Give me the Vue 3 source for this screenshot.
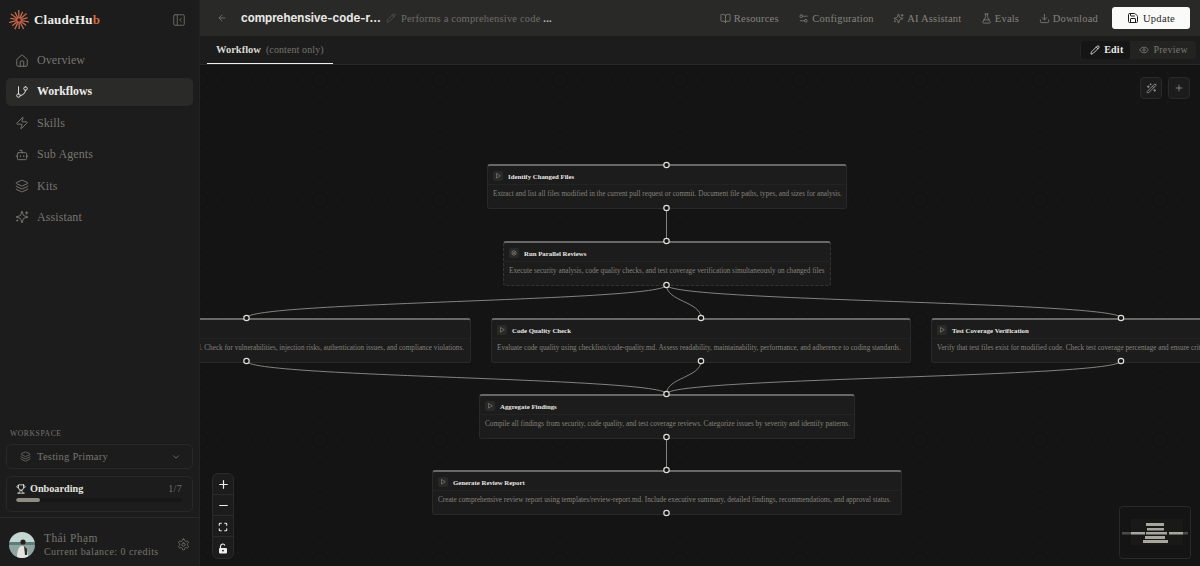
<script setup>
import { h } from 'vue'

const icons = {
  house: 'M15 21v-8a1 1 0 0 0-1-1h-4a1 1 0 0 0-1 1v8|M3 10a2 2 0 0 1 .709-1.528l7-5.999a2 2 0 0 1 2.582 0l7 5.999A2 2 0 0 1 21 10v9a2 2 0 0 1-2 2H5a2 2 0 0 1-2-2z',
  branch: 'M6 3v12|M18 3a3 3 0 1 0 0 6a3 3 0 1 0 0-6|M6 15a3 3 0 1 0 0 6a3 3 0 1 0 0-6|M18 9a9 9 0 0 1-9 9',
  zap: 'M4 14a1 1 0 0 1-.78-1.63l9.9-10.2a.5.5 0 0 1 .86.46l-1.92 6.02A1 1 0 0 0 13 10h7a1 1 0 0 1 .78 1.63l-9.9 10.2a.5.5 0 0 1-.86-.46l1.92-6.02A1 1 0 0 0 11 14z',
  bot: 'M12 8V4H8|M6 8h12a2 2 0 0 1 2 2v8a2 2 0 0 1-2 2H6a2 2 0 0 1-2-2v-8a2 2 0 0 1 2-2z|M2 14h2|M20 14h2|M15 13v2|M9 13v2',
  layers: 'M12.83 2.18a2 2 0 0 0-1.66 0L2.6 6.08a1 1 0 0 0 0 1.83l8.58 3.91a2 2 0 0 0 1.66 0l8.58-3.9a1 1 0 0 0 0-1.83z|M2 12a1 1 0 0 0 .58.91l8.6 3.91a2 2 0 0 0 1.65 0l8.58-3.9A1 1 0 0 0 22 12|M2 17a1 1 0 0 0 .58.91l8.6 3.91a2 2 0 0 0 1.65 0l8.58-3.9A1 1 0 0 0 22 17',
  sparkles: 'M9.937 15.5A2 2 0 0 0 8.5 14.063l-6.135-1.582a.5.5 0 0 1 0-.962L8.5 9.936A2 2 0 0 0 9.937 8.5l1.582-6.135a.5.5 0 0 1 .963 0L14.063 8.5A2 2 0 0 0 15.5 9.937l6.135 1.581a.5.5 0 0 1 0 .964L15.5 14.063a2 2 0 0 0-1.437 1.437l-1.582 6.135a.5.5 0 0 1-.963 0z|M20 3v4|M22 5h-4|M4 17v2|M5 18H3',
  panel: 'M5 3h14a2 2 0 0 1 2 2v14a2 2 0 0 1-2 2H5a2 2 0 0 1-2-2V5a2 2 0 0 1 2-2z|M9 3v18|M16 15l-3-3 3-3',
  chevron: 'm6 9 6 6 6-6',
  trophy: 'M6 9H4.5a2.5 2.5 0 0 1 0-5H6|M18 9h1.5a2.5 2.5 0 0 0 0-5H18|M4 22h16|M10 14.66V17c0 .55-.47.98-.97 1.21C7.85 18.75 7 20.24 7 22|M14 14.66V17c0 .55.47.98.97 1.21C16.15 18.75 17 20.24 17 22|M18 2H6v7a6 6 0 0 0 12 0V2Z',
  gear: 'M12.22 2h-.44a2 2 0 0 0-2 2v.18a2 2 0 0 1-1 1.73l-.43.25a2 2 0 0 1-2 0l-.15-.08a2 2 0 0 0-2.73.73l-.22.38a2 2 0 0 0 .73 2.73l.15.1a2 2 0 0 1 1 1.72v.51a2 2 0 0 1-1 1.74l-.15.09a2 2 0 0 0-.73 2.73l.22.38a2 2 0 0 0 2.73.73l.15-.08a2 2 0 0 1 2 0l.43.25a2 2 0 0 1 1 1.73V20a2 2 0 0 0 2 2h.44a2 2 0 0 0 2-2v-.18a2 2 0 0 1 1-1.73l.43-.25a2 2 0 0 1 2 0l.15.08a2 2 0 0 0 2.73-.73l.22-.39a2 2 0 0 0-.73-2.73l-.15-.08a2 2 0 0 1-1-1.74v-.5a2 2 0 0 1 1-1.74l.15-.09a2 2 0 0 0 .73-2.73l-.22-.38a2 2 0 0 0-2.73-.73l-.15.08a2 2 0 0 1-2 0l-.43-.25a2 2 0 0 1-1-1.73V4a2 2 0 0 0-2-2z|M12 9a3 3 0 1 0 0 6a3 3 0 1 0 0-6',
  back: 'm12 19-7-7 7-7|M19 12H5',
  pencil: 'M21.174 6.812a1 1 0 0 0-3.986-3.987L3.842 16.174a2 2 0 0 0-.5.83l-1.321 4.352a.5.5 0 0 0 .623.622l4.353-1.32a2 2 0 0 0 .83-.497z|m15 5 4 4',
  book: 'M12 7v14|M3 18a1 1 0 0 1-1-1V4a1 1 0 0 1 1-1h5a4 4 0 0 1 4 4 4 4 0 0 1 4-4h5a1 1 0 0 1 1 1v13a1 1 0 0 1-1 1h-6a3 3 0 0 0-3 3 3 3 0 0 0-3-3z',
  sliders: 'M20 7h-9|M14 17H5|M17 14a3 3 0 1 0 0 6a3 3 0 1 0 0-6|M7 4a3 3 0 1 0 0 6a3 3 0 1 0 0-6',
  flask: 'M14 2v6a2 2 0 0 0 .245.96l5.51 10.08A2 2 0 0 1 18 22H6a2 2 0 0 1-1.755-2.96l5.51-10.08A2 2 0 0 0 10 8V2|M6.453 15h11.094|M8.5 2h7',
  download: 'M21 15v4a2 2 0 0 1-2 2H5a2 2 0 0 1-2-2v-4|M7 10l5 5 5-5|M12 15V3',
  save: 'M15.2 3a2 2 0 0 1 1.4.6l3.8 3.8a2 2 0 0 1 .6 1.4V19a2 2 0 0 1-2 2H5a2 2 0 0 1-2-2V5a2 2 0 0 1 2-2z|M17 21v-7a1 1 0 0 0-1-1H8a1 1 0 0 0-1 1v7|M7 3v4a1 1 0 0 0 1 1h7',
  eye: 'M2.062 12.348a1 1 0 0 1 0-.696 10.75 10.75 0 0 1 19.876 0 1 1 0 0 1 0 .696 10.75 10.75 0 0 1-19.876 0|M12 9a3 3 0 1 0 0 6a3 3 0 1 0 0-6',
  wand: 'm21.64 3.64-1.28-1.28a1.21 1.21 0 0 0-1.72 0L2.36 18.64a1.21 1.21 0 0 0 0 1.72l1.28 1.28a1.2 1.2 0 0 0 1.72 0L21.64 5.36a1.2 1.2 0 0 0 0-1.72|m14 7 3 3|M5 6v4|M19 14v4|M10 2v2|M7 8H3|M21 16h-4|M11 3H9',
  plus: 'M5 12h14|M12 5v14',
  minus: 'M5 12h14',
  fit: 'M8 3H5a2 2 0 0 0-2 2v3|M21 8V5a2 2 0 0 0-2-2h-3|M3 16v3a2 2 0 0 0 2 2h3|M16 21h3a2 2 0 0 0 2-2v-3',
  play: 'M6 3.5v17L20 12z',
  boxes: 'M12 3l8 4.5v9L12 21l-8-4.5v-9z|M8 9l8 6|M16 9l-8 6'
}

const Icon = (props) =>
  h(
    'svg',
    {
      width: props.size || 16,
      height: props.size || 16,
      viewBox: '0 0 24 24',
      fill: 'none',
      stroke: 'currentColor',
      'stroke-width': props.sw || 2,
      'stroke-linecap': 'round',
      'stroke-linejoin': 'round'
    },
    icons[props.name].split('|').map((d) => h('path', { d }))
  )
Icon.props = ['name', 'size', 'sw']

const rays = Array.from({ length: 14 }, (_, i) => {
  const a = (i * Math.PI) / 7 + 0.2
  const r = i % 2 ? 8.4 : 9.6
  return {
    x1: 10 + Math.cos(a) * 2.6,
    y1: 10 + Math.sin(a) * 2.6,
    x2: 10 + Math.cos(a) * r,
    y2: 10 + Math.sin(a) * r
  }
})

const nav = [
  { label: 'Overview', icon: 'house' },
  { label: 'Workflows', icon: 'branch', active: true },
  { label: 'Skills', icon: 'zap' },
  { label: 'Sub Agents', icon: 'bot' },
  { label: 'Kits', icon: 'layers' },
  { label: 'Assistant', icon: 'sparkles' }
]

const actions = [
  { label: 'Resources', icon: 'book' },
  { label: 'Configuration', icon: 'sliders' },
  { label: 'AI Assistant', icon: 'sparkles' },
  { label: 'Evals', icon: 'flask' },
  { label: 'Download', icon: 'download' }
]

const nodes = [
  { title: 'Identify Changed Files', icon: 'play', x: 487, y: 164, w: 360, text: 'Extract and list all files modified in the current pull request or commit. Document file paths, types, and sizes for analysis.' },
  { title: 'Run Parallel Reviews', icon: 'boxes', x: 503, y: 241, w: 328, dashed: true, text: 'Execute security analysis, code quality checks, and test coverage verification simultaneously on changed files' },
  { title: 'Security Review', icon: 'play', x: 21, y: 318, w: 450, end: true, text: 'Review code against checklists/security-review.md. Check for vulnerabilities, injection risks, authentication issues, and compliance violations.' },
  { title: 'Code Quality Check', icon: 'play', x: 491, y: 318, w: 420, text: 'Evaluate code quality using checklists/code-quality.md. Assess readability, maintainability, performance, and adherence to coding standards.' },
  { title: 'Test Coverage Verification', icon: 'play', x: 931, y: 318, w: 380, text: 'Verify that test files exist for modified code. Check test coverage percentage and ensure critical paths are tested.' },
  { title: 'Aggregate Findings', icon: 'play', x: 479, y: 394, w: 376, text: 'Compile all findings from security, code quality, and test coverage reviews. Categorize issues by severity and identify patterns.' },
  { title: 'Generate Review Report', icon: 'play', x: 432, y: 470, w: 470, text: 'Create comprehensive review report using templates/review-report.md. Include executive summary, detailed findings, recommendations, and approval status.' }
]

const edges = [
  'M666.5 208V241',
  'M666.5 285C666.5 301.5 246.5 301.5 246.5 318',
  'M666.5 285C666.5 301.5 701 301.5 701 318',
  'M666.5 285C666.5 301.5 1121 301.5 1121 318',
  'M246.5 361C246.5 377.5 666.5 377.5 666.5 394',
  'M701 361C701 377.5 666.5 377.5 666.5 394',
  'M1121 361C1121 377.5 666.5 377.5 666.5 394',
  'M666.5 437V470'
]

const handles = [
  [666.5, 165], [666.5, 208], [666.5, 241], [666.5, 285],
  [246.5, 318], [701, 318], [1121, 318],
  [246.5, 361], [701, 361], [1121, 361],
  [666.5, 394], [666.5, 437], [666.5, 470], [666.5, 513]
]

const miniBars = [
  [27, 17, 18, 3, '#a8a79d'],
  [28, 22, 17, 2.5, '#a8a79d'],
  [12, 26, 14, 2.5, '#a8a79d'],
  [27, 26, 21, 2.5, '#a8a79d'],
  [50, 26, 14, 2.5, '#a8a79d'],
  [3, 26, 9, 2.5, '#4a4a47'],
  [64, 26, 5, 2.5, '#4a4a47'],
  [26, 30, 20, 3, '#a8a79d'],
  [24, 34, 25, 3, '#a8a79d']
]
</script>

<template>
  <div class="app">
    <aside class="sidebar">
      <div class="brand">
        <svg class="logo" width="20" height="20" viewBox="0 0 20 20" fill="none">
          <line v-for="(r, i) in rays" :key="i" :x1="r.x1" :y1="r.y1" :x2="r.x2" :y2="r.y2" stroke="#c4694c" stroke-width="1.3" stroke-linecap="round" />
          <circle cx="10" cy="10" r="2.2" stroke="#d9583c" stroke-width="1" />
        </svg>
        <span class="brand-name">ClaudeHu<em>b</em></span>
        <Icon class="collapse" name="panel" :size="14" :sw="1.6" />
      </div>

      <nav class="nav">
        <a v-for="item in nav" :key="item.label" class="nav-item" :class="{ active: item.active }">
          <Icon :name="item.icon" :size="14" :sw="1.6" />
          <span>{{ item.label }}</span>
        </a>
      </nav>

      <div class="bottom">
        <div class="ws-label">WORKSPACE</div>
        <div class="ws-select">
          <Icon name="layers" :size="11" :sw="1.6" />
          <span>Testing Primary</span>
          <Icon class="ws-chevron" name="chevron" :size="10" />
        </div>
        <div class="onboard">
          <div class="onboard-top">
            <Icon name="trophy" :size="10" />
            <b>Onboarding</b>
            <i>1/7</i>
          </div>
          <div class="progress"><div class="progress-fill"></div></div>
        </div>
      </div>

      <div class="user">
        <svg class="avatar" width="26" height="26" viewBox="0 0 26 26">
          <defs>
            <clipPath id="avatarClip"><circle cx="13" cy="13" r="13" /></clipPath>
          </defs>
          <g clip-path="url(#avatarClip)">
            <rect width="26" height="11" fill="#c4d6d2" />
            <rect y="10" width="26" height="3" fill="#5f7d78" />
            <rect y="13" width="26" height="13" fill="#8fa5a0" />
            <circle cx="14" cy="10" r="2.6" fill="#24211e" />
            <path d="M8 26c0-8 2-12 5-12s6 4 6 12z" fill="#e6e4df" />
            <path d="M15 14l3 3v6h-2z" fill="#2e2b28" />
          </g>
        </svg>
        <div class="user-text">
          <div class="user-name">Thái Phạm</div>
          <div class="user-credit">Current balance: 0 credits</div>
        </div>
        <Icon class="user-gear" name="gear" :size="13" :sw="1.6" />
      </div>
    </aside>

    <main class="main">
      <header class="topbar">
        <Icon class="back" name="back" :size="10" />
        <h1 class="title">comprehensive-code-r...</h1>
        <Icon class="edit-title" name="pencil" :size="10" :sw="1.6" />
        <p class="desc">Performs a comprehensive code <b>...</b></p>
        <div class="actions">
          <a v-for="a in actions" :key="a.label" class="action">
            <Icon :name="a.icon" :size="11" :sw="1.7" />
            <span>{{ a.label }}</span>
          </a>
          <button class="update">
            <Icon name="save" :size="12" />
            <span>Update</span>
          </button>
        </div>
      </header>

      <div class="tabs">
        <div class="tab"><b>Workflow</b><span>(content only)</span></div>
        <div class="toggle">
          <div class="toggle-btn on"><Icon name="pencil" :size="10" /><span>Edit</span></div>
          <div class="toggle-btn"><Icon name="eye" :size="10" /><span>Preview</span></div>
        </div>
      </div>

      <section class="canvas">
        <div class="viewport">
          <div
            v-for="n in nodes"
            :key="n.title"
            class="node"
            :class="{ dashed: n.dashed }"
            :style="{ left: n.x + 'px', top: n.y + 'px', width: n.w + 'px' }"
          >
            <div class="node-head">
              <span class="node-icon"><Icon :name="n.icon" :size="6" :sw="2" /></span>
              <span class="node-title">{{ n.title }}</span>
            </div>
            <div class="node-text" :class="{ end: n.end }">{{ n.text }}</div>
          </div>
          <svg class="wires" width="1200" height="566" viewBox="0 0 1200 566" fill="none">
            <path v-for="(d, i) in edges" :key="i" :d="d" stroke="#8f8f8a" stroke-width="0.9" />
            <circle v-for="(p, i) in handles" :key="'h' + i" :cx="p[0]" :cy="p[1]" r="2.7" fill="#141414" stroke="#dededa" stroke-width="1.2" />
          </svg>
        </div>

        <div class="tools">
          <button class="tool"><Icon name="wand" :size="11" :sw="1.7" /></button>
          <button class="tool"><Icon name="plus" :size="10" :sw="1.7" /></button>
        </div>

        <div class="zoom">
          <button class="zoom-btn"><Icon name="plus" :size="13" :sw="2.2" /></button>
          <button class="zoom-btn"><Icon name="minus" :size="13" :sw="2.2" /></button>
          <button class="zoom-btn"><Icon name="fit" :size="10" :sw="2.6" /></button>
          <button class="zoom-btn">
            <svg width="10" height="11" viewBox="0 0 10 11">
              <path d="M2.5 5V3.2a2.3 2.3 0 0 1 4.4-.8" fill="none" stroke="#eee" stroke-width="1.2" />
              <rect x="1" y="5" width="8" height="5.5" rx="1" fill="#eee" />
              <circle cx="5" cy="7.6" r="0.9" fill="#1c1c1c" />
            </svg>
          </button>
        </div>

        <svg class="minimap" width="72" height="53" viewBox="0 0 72 53">
          <rect x="0.5" y="0.5" width="71" height="52" rx="3" fill="#141414" stroke="#2a2a28" />
          <rect x="12" y="13" width="52" height="26" fill="#191918" />
          <rect v-for="(b, i) in miniBars" :key="i" :x="b[0]" :y="b[1]" :width="b[2]" :height="b[3]" :fill="b[4]" />
        </svg>
      </section>
    </main>
  </div>
</template>

<style>
html, body { margin: 0; background: #141414; }
</style>

<style scoped>
.app {
  width: 1200px;
  height: 566px;
  display: flex;
  overflow: hidden;
  font-family: "Liberation Serif", serif;
  color: #77756f;
}
.sidebar {
  width: 200px;
  flex: none;
  box-sizing: border-box;
  display: flex;
  flex-direction: column;
  background: #1c1c1c;
  border-right: 1px solid #232323;
}
.brand {
  display: flex;
  align-items: center;
  height: 40px;
  padding: 0 13px 0 9px;
}
.logo { margin-right: 5px; }
.brand-name {
  font-size: 13px;
  font-weight: 700;
  color: #eeedea;
  letter-spacing: 0.2px;
}
.brand-name em { font-style: normal; color: #cf6a45; }
.collapse { margin-left: auto; color: #6b6a65; }
.nav {
  display: flex;
  flex-direction: column;
  gap: 3.4px;
  padding: 6.5px 6px 0;
}
.nav-item {
  display: flex;
  align-items: center;
  gap: 8px;
  height: 28px;
  padding-left: 9px;
  border-radius: 5px;
  font-size: 12px;
  letter-spacing: 0.1px;
}
.nav-item svg { color: #7c7a74; }
.nav-item.active {
  background: #2a2a29;
  color: #eeedea;
  font-size: 11.8px;
  font-weight: 700;
  letter-spacing: 0;
}
.nav-item.active svg { color: #e8e7e3; }
.bottom {
  margin-top: auto;
  padding: 0 6px;
}
.ws-label {
  padding-left: 4px;
  font-size: 7.6px;
  letter-spacing: 0.6px;
  line-height: 10px;
  color: #77756f;
  margin-bottom: 5px;
}
.ws-select {
  height: 25px;
  box-sizing: border-box;
  display: flex;
  align-items: center;
  gap: 6px;
  padding: 0 11px 0 13px;
  border: 1px solid #282827;
  border-radius: 5px;
  font-size: 10.5px;
  letter-spacing: 0.25px;
}
.ws-chevron { margin-left: auto; }
.onboard {
  margin-top: 7px;
  height: 36px;
  box-sizing: border-box;
  padding: 6px 10px 0 9px;
  border: 1px solid #282827;
  border-radius: 5px;
}
.onboard-top {
  display: flex;
  align-items: center;
  gap: 4px;
  font-size: 10.2px;
  color: #e4e3df;
}
.onboard-top i {
  margin-left: auto;
  font-style: normal;
  font-size: 10px;
  letter-spacing: 0.3px;
  color: #6f6d68;
}
.progress {
  margin-top: 4px;
  height: 4px;
  border-radius: 2px;
  background: #171717;
  overflow: hidden;
}
.progress-fill {
  width: 24px;
  height: 100%;
  border-radius: 2px;
  background: #8d8c80;
}
.user {
  margin-top: 5px;
  height: 49px;
  box-sizing: border-box;
  display: flex;
  align-items: center;
  gap: 9px;
  padding: 5px 9px 0;
  border-top: 1px solid #2a2a29;
}
.avatar { flex: none; }
.user-name { font-size: 11.5px; letter-spacing: 0.4px; line-height: 14px; }
.user-credit { font-size: 10px; letter-spacing: 0.45px; line-height: 14px; }
.user-gear { margin-left: auto; }
.main {
  flex: 1;
  min-width: 0;
  display: flex;
  flex-direction: column;
}
.topbar {
  height: 36px;
  flex: none;
  box-sizing: border-box;
  display: flex;
  align-items: center;
  padding: 0 10px 0 17px;
  background: #292928;
}
.back { color: #77756f; margin-right: 14px; }
.title {
  margin: 0;
  font-family: "Inter", sans-serif;
  font-size: 11.4px;
  font-weight: 700;
  color: #e8e7e3;
  white-space: nowrap;
}
.edit-title { margin: 0 5px; color: #5f5e5a; }
.desc {
  margin: 0;
  font-size: 10.5px;
  letter-spacing: 0.18px;
  white-space: nowrap;
  color: #6f6d68;
}
.desc b { color: #bbb; }
.actions {
  margin-left: auto;
  display: flex;
  align-items: center;
}
.action {
  display: flex;
  align-items: center;
  gap: 3px;
  margin-right: 19.5px;
  font-size: 10.5px;
  letter-spacing: 0.2px;
  color: #85837c;
}
.action:last-of-type { margin-right: 14px; }
.update {
  width: 78px;
  height: 22px;
  padding: 0;
  display: flex;
  align-items: center;
  justify-content: center;
  gap: 4px;
  border: 0;
  border-radius: 3px;
  background: #fafaf8;
  color: #1c1c1c;
  font-family: inherit;
  font-size: 10.5px;
  letter-spacing: 0.3px;
}
.tabs {
  height: 29px;
  flex: none;
  box-sizing: border-box;
  display: flex;
  justify-content: space-between;
  padding: 0 4px 0 7px;
  background: #1c1c1c;
  border-bottom: 1px solid #292928;
}
.tab {
  width: 126px;
  box-sizing: border-box;
  height: 28px;
  padding: 0 0 1px 9px;
  display: flex;
  align-items: center;
  gap: 5px;
  border-bottom: 1px solid #f0f0ee;
  font-size: 10.5px;
  white-space: nowrap;
}
.tab b { color: #d8d7d3; }
.tab span { font-size: 10px; letter-spacing: 0.1px; }
.toggle {
  display: flex;
  height: 18px;
  margin-top: 5px;
  padding: 0 1px;
  background: #232322;
  border-radius: 3px;
}
.toggle-btn {
  display: flex;
  align-items: center;
  gap: 4px;
  padding: 0 7px 1px 9px;
  font-size: 10px;
  letter-spacing: 0.25px;
  color: #7a7871;
}
.toggle-btn.on {
  background: #151515;
  color: #eeedea;
  font-weight: 700;
  border-radius: 3px;
}
.canvas {
  position: relative;
  flex: 1;
  overflow: hidden;
  background-color: #141414;
  background-image: radial-gradient(#1f1f1f 0.6px, transparent 0.8px);
  background-size: 15px 15px;
}
.viewport {
  position: absolute;
  left: 0;
  top: 0;
  width: 1200px;
  height: 566px;
  transform: translate(-200px, -65px);
}
.wires {
  position: absolute;
  left: 0;
  top: 0;
  pointer-events: none;
}
.node {
  position: absolute;
  height: 45px;
  box-sizing: border-box;
  background: #1c1c1c;
  border: 1px solid #292928;
  border-top: 2px solid #686866;
  border-radius: 3px;
}
.node.dashed {
  border-style: dashed;
  border-color: #343432;
  border-top: 2px solid #686866;
}
.node-head {
  height: 19px;
  box-sizing: border-box;
  display: flex;
  align-items: center;
  gap: 5px;
  padding: 2px 6px 0 5px;
  border-bottom: 1px solid #232322;
}
.node-icon {
  width: 10px;
  height: 10px;
  display: flex;
  align-items: center;
  justify-content: center;
  border-radius: 2px;
  background: #292928;
  color: #a5a39c;
}
.node-title {
  font-size: 6.8px;
  font-weight: 700;
  color: #e8e7e3;
  white-space: nowrap;
}
.node-text {
  padding: 0 6px 0 5px;
  margin-top: 3px;
  font-size: 7.2px;
  line-height: 12px;
  color: #85837b;
  white-space: nowrap;
  overflow: hidden;
}
.node-text.end { text-align: right; direction: rtl; unicode-bidi: plaintext; }
.tools {
  position: absolute;
  right: 10px;
  top: 12px;
  display: flex;
  gap: 6px;
}
.tool {
  width: 22px;
  height: 22px;
  padding: 0;
  display: flex;
  align-items: center;
  justify-content: center;
  background: #1c1c1c;
  border: 1px solid #2a2a29;
  border-radius: 4px;
  color: #a5a39c;
}
.zoom {
  position: absolute;
  left: 12px;
  bottom: 7px;
  width: 22px;
  box-sizing: border-box;
  display: flex;
  flex-direction: column;
  background: #1c1c1c;
  border: 1px solid #2a2a29;
  border-radius: 6px;
  overflow: hidden;
}
.zoom-btn {
  height: 21px;
  padding: 1px 0 0;
  display: flex;
  align-items: center;
  justify-content: center;
  background: none;
  border: 0;
  border-bottom: 1px solid #2a2a29;
  color: #eee;
}
.zoom-btn:last-child { border-bottom: 0; }
.minimap {
  position: absolute;
  right: 9px;
  bottom: 7px;
}
</style>
